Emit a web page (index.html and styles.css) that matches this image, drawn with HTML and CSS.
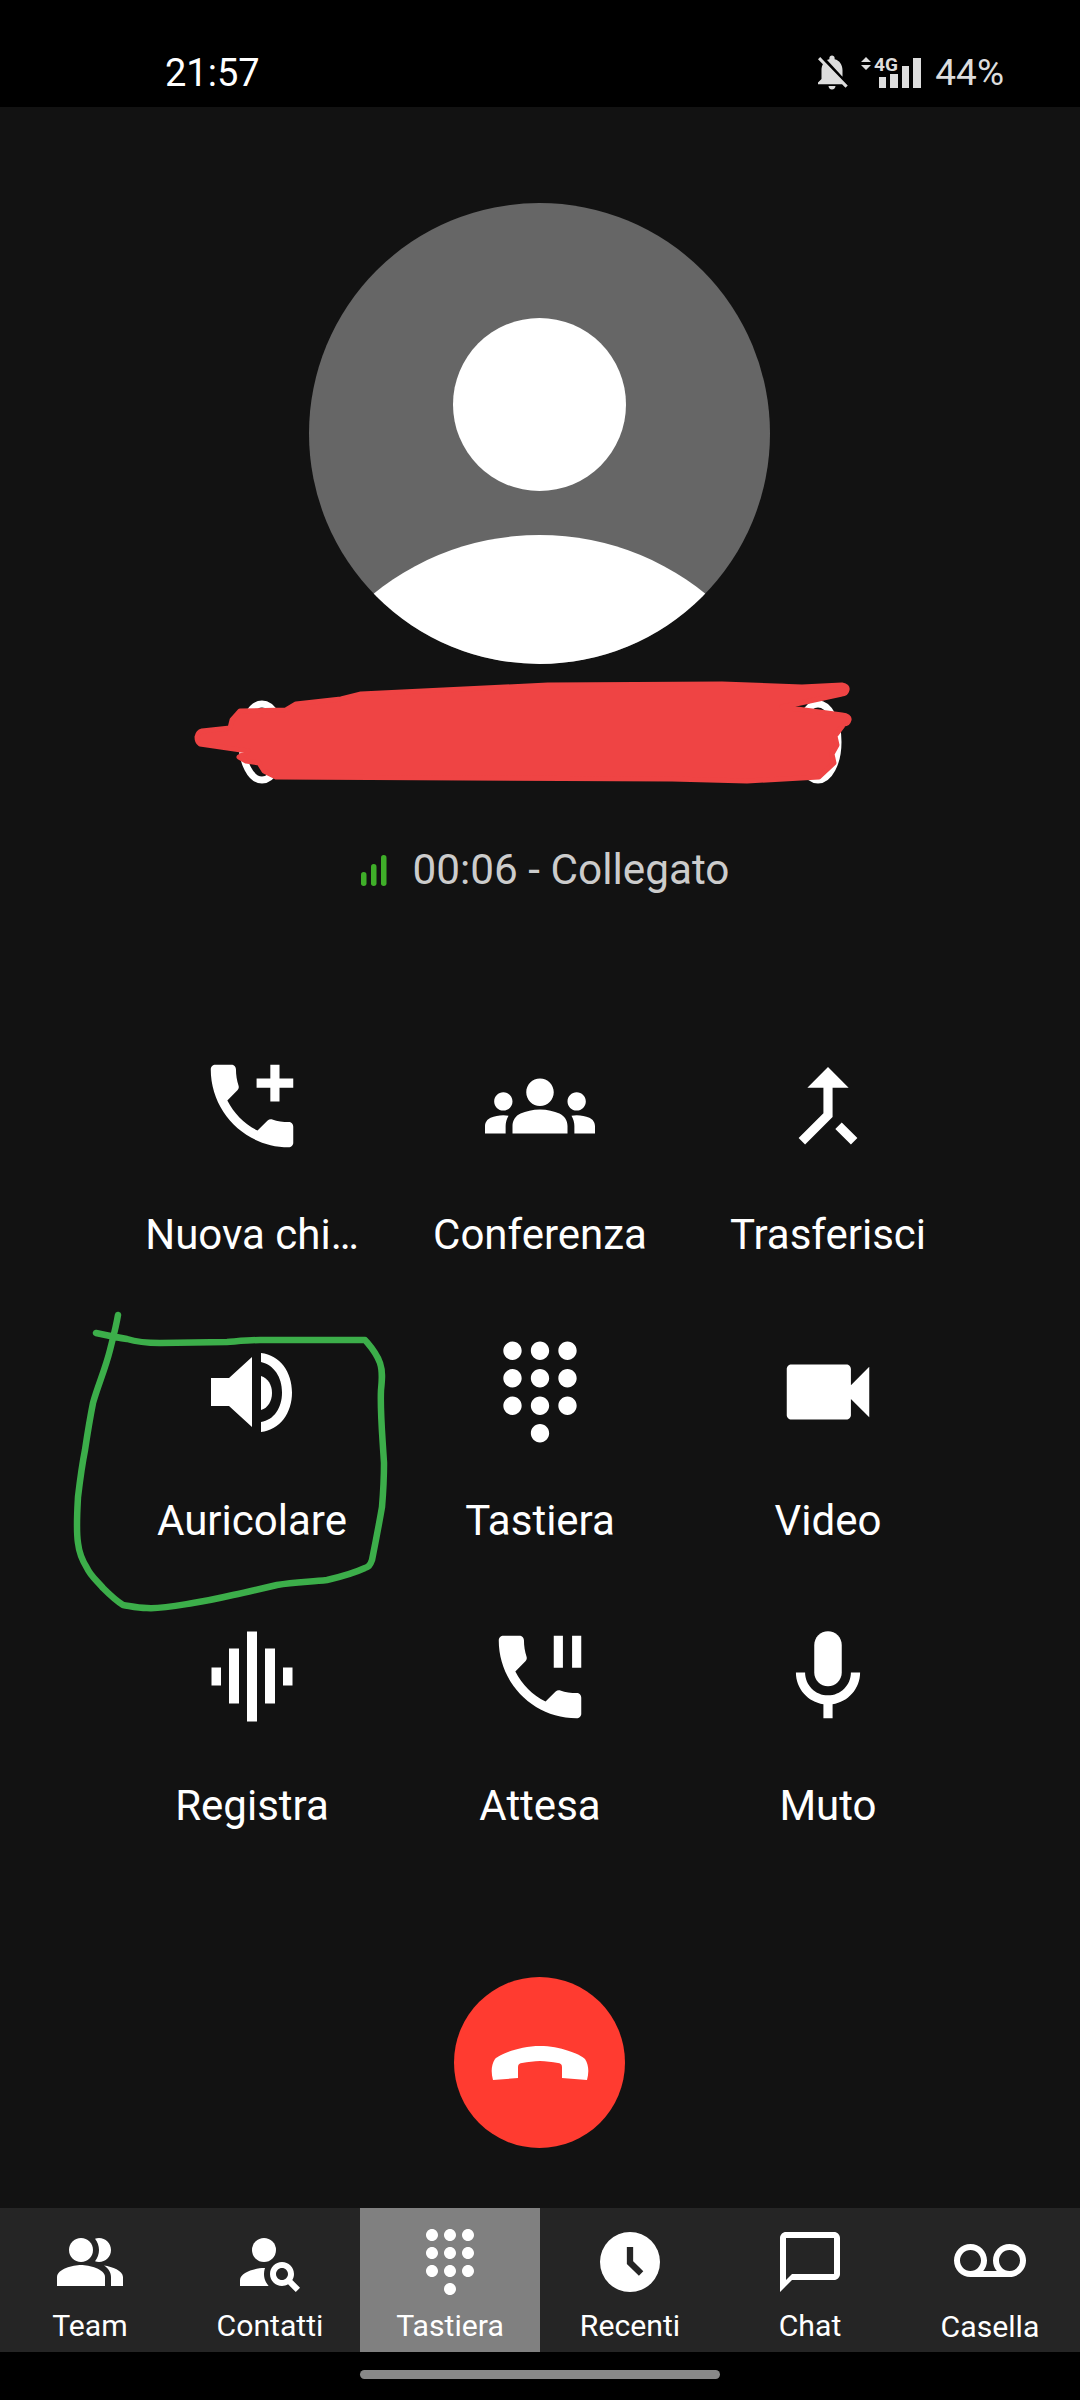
FILE: index.html
```html
<!DOCTYPE html>
<html lang="it">
<head>
    <meta charset="UTF-8">
    <meta name="viewport" content="width=device-width, initial-scale=1.0">
    <title>Chiamata in corso</title>
    <link rel="stylesheet" href="styles.css">
</head>
<body>
    <!-- Status bar -->
    <header class="status-bar">
        <span class="status-time">21:57</span>
        <div class="status-right">
            <svg class="status-bell" viewBox="0 0 24 24"><path d="M20 18.69L7.84 6.14 5.27 3.49 4 4.76l2.8 2.8v.01c-.52.99-.8 2.16-.8 3.42v5l-2 2v1h13.73l2 2L21 19.72l-1-1.03zM12 22c1.11 0 2-.89 2-2h-4c0 1.11.89 2 2 2zm6-7.32V11c0-3.08-1.64-5.64-4.5-6.32V4c0-.83-.67-1.5-1.5-1.5s-1.5.67-1.5 1.5v.68c-.15.03-.29.08-.42.12-.1.03-.2.07-.3.11h-.01c-.2.08-.4.18-.59.29-.01 0-.01 0-.02.01L18 14.68z"/></svg>
            <svg class="status-signal" viewBox="0 0 64 33">
                <path d="M3 6L8 1l5 5zM3 9h10l-5 5z"/>
                <text class="status-4g" x="16" y="15">4G</text>
                <rect x="21" y="21" width="7" height="11"/>
                <rect x="32" y="18" width="8" height="14"/>
                <rect x="44" y="10" width="7" height="22"/>
                <rect x="55" y="2" width="8" height="30"/>
            </svg>
            <span class="status-battery">44%</span>
        </div>
    </header>

    <main class="call-screen">
        <!-- Avatar -->
        <svg class="avatar" viewBox="0 0 461 461">
            <defs>
                <clipPath id="avatarClip"><circle cx="230.5" cy="230.5" r="230.5"/></clipPath>
            </defs>
            <circle cx="230.5" cy="230.5" r="230.5" fill="#666666"/>
            <circle cx="230.5" cy="201.5" r="86.5" fill="#ffffff"/>
            <circle cx="230.5" cy="596" r="264" fill="#ffffff" clip-path="url(#avatarClip)"/>
        </svg>

        <!-- Caller name, scribbled over in the screenshot -->
        <div class="caller-name">
            <svg class="name-scribble" viewBox="0 0 1080 130">
                <g fill="none" stroke="#ffffff" stroke-width="7">
                    <ellipse cx="262" cy="78" rx="20" ry="38"/>
                    <ellipse cx="818" cy="78" rx="20" ry="38"/>
                </g>
                <path fill="#ffffff" d="M562 110h14v6h-14zM672 110h14v6h-14z"/>
                <path class="scribble-fill" d="M197 73Q198 68 202 67L230 64 232 56 240 47 286 46 296 40 341 35 361 30 548 21 722 20 802 23 842 21Q848 22 847 26 846 30 842 30L782 43 842 51 Q850 52 849 56 848 60 844 60L835 72 837 81 832 90 834 99 819 113 747 117 672 115 276 113 264 107 259 99 246 97 239 93 248 87 200 80Q197 78 197 73Z"/>
            </svg>
        </div>

        <!-- Call state -->
        <div class="call-status">
            <svg class="call-quality" viewBox="0 0 26 31">
                <rect x="0" y="17" width="5.5" height="14" rx="2.7"/>
                <rect x="10" y="9" width="5.5" height="22" rx="2.7"/>
                <rect x="20" y="0" width="5.5" height="31" rx="2.7"/>
            </svg>
            <span>00:06 - Collegato</span>
        </div>

        <!-- Call actions -->
        <div class="actions">
            <div class="action">
                <svg class="action-icon" viewBox="0 0 24 24"><path d="M20 15.5c-1.25 0-2.45-.2-3.57-.57-.35-.11-.74-.03-1.02.24l-2.2 2.2c-2.83-1.44-5.15-3.75-6.59-6.59l2.2-2.21c.28-.26.36-.65.25-1C8.7 6.45 8.5 5.25 8.5 4c0-.55-.45-1-1-1H4c-.55 0-1 .45-1 1 0 9.39 7.61 17 17 17 .55 0 1-.45 1-1v-3.5c0-.55-.45-1-1-1zM21 6h-3V3h-2v3h-3v2h3v3h2V8h3z"/></svg>
                <span class="action-label">Nuova chi…</span>
            </div>
            <div class="action">
                <svg class="action-icon" viewBox="0 0 24 24"><path d="M12 12.75c1.63 0 3.07.39 4.24.9 1.08.48 1.76 1.56 1.76 2.73V18H6v-1.61c0-1.18.68-2.26 1.76-2.73 1.17-.52 2.61-.91 4.24-.91zM4 13c1.1 0 2-.9 2-2s-.9-2-2-2-2 .9-2 2 .9 2 2 2zm1.13 1.1c-.37-.06-.74-.1-1.13-.1-.99 0-1.93.21-2.78.58C.48 14.9 0 15.62 0 16.43V18h4.5v-1.61c0-.83.23-1.61.63-2.29zM20 13c1.1 0 2-.9 2-2s-.9-2-2-2-2 .9-2 2 .9 2 2 2zm4 3.43c0-.81-.48-1.53-1.22-1.85-.85-.37-1.79-.58-2.78-.58-.39 0-.76.04-1.13.1.4.68.63 1.46.63 2.29V18H24v-1.57zM12 6c1.66 0 3 1.34 3 3s-1.34 3-3 3-3-1.34-3-3 1.34-3 3-3z"/></svg>
                <span class="action-label">Conferenza</span>
            </div>
            <div class="action">
                <svg class="action-icon" viewBox="0 0 24 24"><path d="M17 20.41L18.41 19 15 15.59 13.59 17 17 20.41zM7.5 8H11v5.59L5.59 19 7 20.41l6-6V8h3.5L12 3.5 7.5 8z"/></svg>
                <span class="action-label">Trasferisci</span>
            </div>
            <div class="action">
                <svg class="action-icon" viewBox="0 0 110 110"><path d="M14 41H32L55 20V90L32 69H14Z"/><path d="M64 39C71 41 75 48 75 56 75 64 71 71 64 73Z"/><path d="M64 16C83 18 95 35 95 55.5 95 76 83 93 64 95V85C77 83 85 71 85 55.5 85 40 77 28 64 25Z"/></svg>
                <span class="action-label">Auricolare</span>
            </div>
            <div class="action">
                <svg class="action-icon" viewBox="0 0 24 24"><path d="M12 19c-1.1 0-2 .9-2 2s.9 2 2 2 2-.9 2-2-.9-2-2-2zM6 1c-1.1 0-2 .9-2 2s.9 2 2 2 2-.9 2-2-.9-2-2-2zm0 6c-1.1 0-2 .9-2 2s.9 2 2 2 2-.9 2-2-.9-2-2-2zm0 6c-1.1 0-2 .9-2 2s.9 2 2 2 2-.9 2-2-.9-2-2-2zm12-8c1.1 0 2-.9 2-2s-.9-2-2-2-2 .9-2 2 .9 2 2 2zm-6 8c-1.1 0-2 .9-2 2s.9 2 2 2 2-.9 2-2-.9-2-2-2zm6 0c-1.1 0-2 .9-2 2s.9 2 2 2 2-.9 2-2-.9-2-2-2zm0-6c-1.1 0-2 .9-2 2s.9 2 2 2 2-.9 2-2-.9-2-2-2zm-6 0c-1.1 0-2 .9-2 2s.9 2 2 2 2-.9 2-2-.9-2-2-2zm0-6c-1.1 0-2 .9-2 2s.9 2 2 2 2-.9 2-2-.9-2-2-2z"/></svg>
                <span class="action-label">Tastiera</span>
            </div>
            <div class="action">
                <svg class="action-icon" viewBox="0 0 24 24"><path d="M17 10.5V7c0-.55-.45-1-1-1H4c-.55 0-1 .45-1 1v10c0 .55.45 1 1 1h12c.55 0 1-.45 1-1v-3.5l4 4v-11l-4 4z"/></svg>
                <span class="action-label">Video</span>
            </div>
            <div class="action">
                <svg class="action-icon" viewBox="0 0 110 110"><rect x="14.5" y="45.5" width="9.5" height="18"/><rect x="32" y="26.5" width="10" height="55"/><rect x="50" y="9.5" width="10" height="90"/><rect x="68" y="26.5" width="10" height="55"/><rect x="86" y="45.5" width="9.5" height="18"/></svg>
                <span class="action-label">Registra</span>
            </div>
            <div class="action">
                <svg class="action-icon" viewBox="0 0 24 24"><path d="M15 3h2v7h-2zm4 0h2v7h-2zM20 15.5c-1.25 0-2.45-.2-3.57-.57-.35-.11-.74-.03-1.02.24l-2.2 2.2c-2.83-1.44-5.15-3.75-6.59-6.59l2.2-2.21c.28-.26.36-.65.25-1C8.7 6.45 8.5 5.25 8.5 4c0-.55-.45-1-1-1H4c-.55 0-1 .45-1 1 0 9.39 7.61 17 17 17 .55 0 1-.45 1-1v-3.5c0-.55-.45-1-1-1z"/></svg>
                <span class="action-label">Attesa</span>
            </div>
            <div class="action">
                <svg class="action-icon" viewBox="0 0 24 24"><path d="M12 14c1.66 0 3-1.34 3-3V5c0-1.66-1.34-3-3-3S9 3.34 9 5v6c0 1.66 1.34 3 3 3z"/><path d="M17 11c0 2.76-2.24 5-5 5s-5-2.24-5-5H5c0 3.53 2.61 6.43 6 6.92V21h2v-3.08c3.39-.49 6-3.39 6-6.92h-2z"/></svg>
                <span class="action-label">Muto</span>
            </div>
            <!-- Hand drawn circle around the speaker button -->
            <svg class="speaker-scribble" viewBox="0 0 320 320">
                <path d="M6 33C20 36 30 38 37 39 50 43 60 43 70 43L137 42C150 41 160 40 170 40L275 40C280 46 286 52 290 63 293 72 292 80 291 90 290 110 292 130 294 163 294 180 293 195 292 207 288 230 285 245 282 260 280 266 278 267 275 268 262 274 250 277 237 280 220 282 205 282 187 285 170 289 157 292 143 295 130 298 116 301 103 303 85 306 70 309 57 308 47 308 40 306 33 305 25 300 20 295 13 288 6 280 0 275 -3 268 -8 260 -11 252 -12 243 -14 230 -13 215 -12 197 -10 180 -8 165 -5 150 -2 130 0 118 3 103 8 85 15 70 20 50 23 38 26 27 28 15"/>
            </svg>
        </div>

        <!-- Hang up -->
        <div class="hangup">
            <svg viewBox="0 0 171 171"><path d="M39 103C37 96 37 88 41 82 46 77 66 69 86 69 106 69 126 77 131 82 135 88 135 96 133 103L108 101V90C108 87 106 86 104 86 98 85 92 84 86 84 80 84 74 85 68 86 66 86 64 87 64 90V101Z"/></svg>
        </div>
    </main>

    <!-- Bottom tabs -->
    <nav class="tabbar">
        <div class="tab">
            <svg class="tab-icon" viewBox="0 0 24 24"><path d="M16.67 13.13C18.04 14.06 19 15.32 19 17v3h4v-3c0-2.18-3.57-3.47-6.33-3.87z"/><path d="M15 12c2.21 0 4-1.79 4-4s-1.79-4-4-4c-.47 0-.91.1-1.33.24C14.5 5.27 15 6.58 15 8s-.5 2.73-1.33 3.76c.42.14.86.24 1.33.24z"/><path d="M9 12c2.21 0 4-1.79 4-4s-1.79-4-4-4-4 1.79-4 4 1.79 4 4 4z"/><path d="M9 13c-2.67 0-8 1.34-8 4v3h16v-3c0-2.66-5.33-4-8-4z"/></svg>
            <span class="tab-label">Team</span>
        </div>
        <div class="tab">
            <svg class="tab-icon" viewBox="0 0 24 24"><circle cx="10" cy="8" r="4"/><path d="M10.35 14.01C7.62 13.91 2 15.27 2 18v2h9.54c-2.47-2.76-1.23-5.89-1.19-5.99z"/><path d="M19.43 18.02c.36-.59.57-1.28.57-2.02 0-2.21-1.79-4-4-4s-4 1.79-4 4 1.79 4 4 4c.74 0 1.43-.22 2.02-.57L20.59 22 22 20.59l-2.57-2.57zM16 18c-1.1 0-2-.9-2-2s.9-2 2-2 2 .9 2 2-.9 2-2 2z"/></svg>
            <span class="tab-label">Contatti</span>
        </div>
        <div class="tab tab-active">
            <svg class="tab-icon" viewBox="0 0 24 24"><path d="M12 19c-1.1 0-2 .9-2 2s.9 2 2 2 2-.9 2-2-.9-2-2-2zM6 1c-1.1 0-2 .9-2 2s.9 2 2 2 2-.9 2-2-.9-2-2-2zm0 6c-1.1 0-2 .9-2 2s.9 2 2 2 2-.9 2-2-.9-2-2-2zm0 6c-1.1 0-2 .9-2 2s.9 2 2 2 2-.9 2-2-.9-2-2-2zm12-8c1.1 0 2-.9 2-2s-.9-2-2-2-2 .9-2 2 .9 2 2 2zm-6 8c-1.1 0-2 .9-2 2s.9 2 2 2 2-.9 2-2-.9-2-2-2zm6 0c-1.1 0-2 .9-2 2s.9 2 2 2 2-.9 2-2-.9-2-2-2zm0-6c-1.1 0-2 .9-2 2s.9 2 2 2 2-.9 2-2-.9-2-2-2zm-6 0c-1.1 0-2 .9-2 2s.9 2 2 2 2-.9 2-2-.9-2-2-2zm0-6c-1.1 0-2 .9-2 2s.9 2 2 2 2-.9 2-2-.9-2-2-2z"/></svg>
            <span class="tab-label">Tastiera</span>
        </div>
        <div class="tab">
            <svg class="tab-icon" viewBox="0 0 24 24"><circle cx="12" cy="12" r="10"/><path class="clock-hand" d="M12 7v5.2l3.7 3.6"/></svg>
            <span class="tab-label">Recenti</span>
        </div>
        <div class="tab">
            <svg class="tab-icon" viewBox="0 0 24 24"><path d="M20 2H4c-1.1 0-2 .9-2 2v18l4-4h14c1.1 0 2-.9 2-2V4c0-1.1-.9-2-2-2zm0 14H6l-2 2V4h16v12z"/></svg>
            <span class="tab-label">Chat</span>
        </div>
        <div class="tab">
            <svg class="tab-icon" viewBox="0 0 24 24"><path d="M18.5 6C15.46 6 13 8.46 13 11.5c0 1.33.47 2.55 1.26 3.5H9.74c.79-.95 1.26-2.17 1.26-3.5C11 8.46 8.54 6 5.5 6S0 8.46 0 11.5 2.46 17 5.5 17h13c3.04 0 5.5-2.46 5.5-5.5S21.54 6 18.5 6zm-13 9C3.57 15 2 13.43 2 11.5S3.57 8 5.5 8 9 9.57 9 11.5 7.43 15 5.5 15zm13 0c-1.93 0-3.5-1.57-3.5-3.5S16.57 8 18.5 8 22 9.57 22 11.5 20.43 15 18.5 15z"/></svg>
            <span class="tab-label tab-label-low">Casella</span>
        </div>
    </nav>

    <!-- Gesture bar -->
    <footer class="gesture-area">
        <div class="gesture-pill"></div>
    </footer>
</body>
</html>
```

FILE: styles.css
```css
* {
    box-sizing: border-box;
}

body {
    font-family: Roboto, 'Liberation Sans', sans-serif;
    background-color: #121212;
    color: #ffffff;
    display: flex;
    flex-direction: column;
    width: 1080px;
    height: 2400px;
    margin: 0;
    overflow: hidden;
}

/* Status bar */
.status-bar {
    flex: none;
    display: flex;
    justify-content: space-between;
    align-items: center;
    height: 107px;
    padding: 39px 76px 0 165px;
    background-color: #000000;
}

.status-time {
    font-size: 38px;
    line-height: 44px;
}

.status-right {
    display: flex;
    align-items: center;
    color: #dddddd;
    fill: #dddddd;
}

.status-bell {
    width: 42px;
    height: 42px;
    margin-top: -2px;
}

.status-signal {
    width: 64px;
    height: 33px;
    margin-top: -2px;
    margin-left: 5px;
    overflow: visible;
}

.status-4g {
    font-size: 19px;
    font-weight: 700;
}

.status-battery {
    margin-left: 13px;
    font-size: 37px;
    line-height: 44px;
}

/* Call area */
.call-screen {
    flex: none;
    display: flex;
    flex-direction: column;
    align-items: center;
    height: 2101px;
    padding-top: 96px;
}

.avatar {
    flex: none;
    width: 461px;
    height: 461px;
    margin-right: 1px;
}

.caller-name {
    position: relative;
    flex: none;
    width: 100%;
    height: 182px;
}

.name-scribble {
    position: absolute;
    top: 0;
    left: 0;
    width: 1080px;
    height: 130px;
}

.scribble-fill {
    fill: #ef4444;
    stroke: #ef4444;
    stroke-width: 5;
    stroke-linejoin: round;
}

.call-status {
    flex: none;
    display: flex;
    align-items: center;
    gap: 26px;
    height: 48px;
    padding-left: 10px;
    color: #cccccc;
    font-size: 42.3px;
    line-height: 48px;
}

.call-quality {
    width: 26px;
    height: 31px;
    fill: #3fae29;
}

/* Action grid */
.actions {
    position: relative;
    flex: none;
    display: grid;
    grid-template-columns: repeat(3, 288px);
    grid-auto-rows: 285.5px;
    margin-top: 157px;
}

.action {
    display: flex;
    flex-direction: column;
    align-items: center;
}

.action-icon {
    flex: none;
    width: 110px;
    height: 110px;
    fill: #ffffff;
}

.action-label {
    margin-top: 49px;
    font-size: 42px;
    line-height: 50px;
    white-space: nowrap;
}

.speaker-scribble {
    position: absolute;
    top: 249px;
    left: -18px;
    width: 320px;
    height: 320px;
    overflow: visible;
    fill: none;
    stroke: #3cae4a;
    stroke-width: 6.5;
    stroke-linecap: round;
    stroke-linejoin: round;
}

.hangup {
    flex: none;
    width: 171px;
    height: 171px;
    margin-top: 69px;
    margin-right: 1px;
    border-radius: 50%;
    background-color: #ff3b30;
}

.hangup svg {
    display: block;
    fill: #ffffff;
}

/* Bottom tabs */
.tabbar {
    flex: none;
    display: grid;
    grid-template-columns: repeat(6, 180px);
    height: 144px;
    background-color: #252525;
}

.tab {
    display: flex;
    flex-direction: column;
    align-items: center;
    padding-top: 18px;
}

.tab-active {
    background-color: #808080;
}

.tab-icon {
    flex: none;
    width: 72px;
    height: 72px;
    fill: #ffffff;
}

.clock-hand {
    fill: none;
    stroke: #252525;
    stroke-width: 2.1;
}

.tab-label {
    margin-top: 10px;
    font-size: 30.2px;
    line-height: 36px;
}

.tab-label-low {
    margin-top: 11px;
}

/* Gesture bar */
.gesture-area {
    flex: none;
    height: 48px;
    padding-top: 18px;
    background-color: #000000;
}

.gesture-pill {
    width: 360px;
    height: 9px;
    margin: 0 auto;
    border-radius: 5px;
    background-color: #888888;
}
```
